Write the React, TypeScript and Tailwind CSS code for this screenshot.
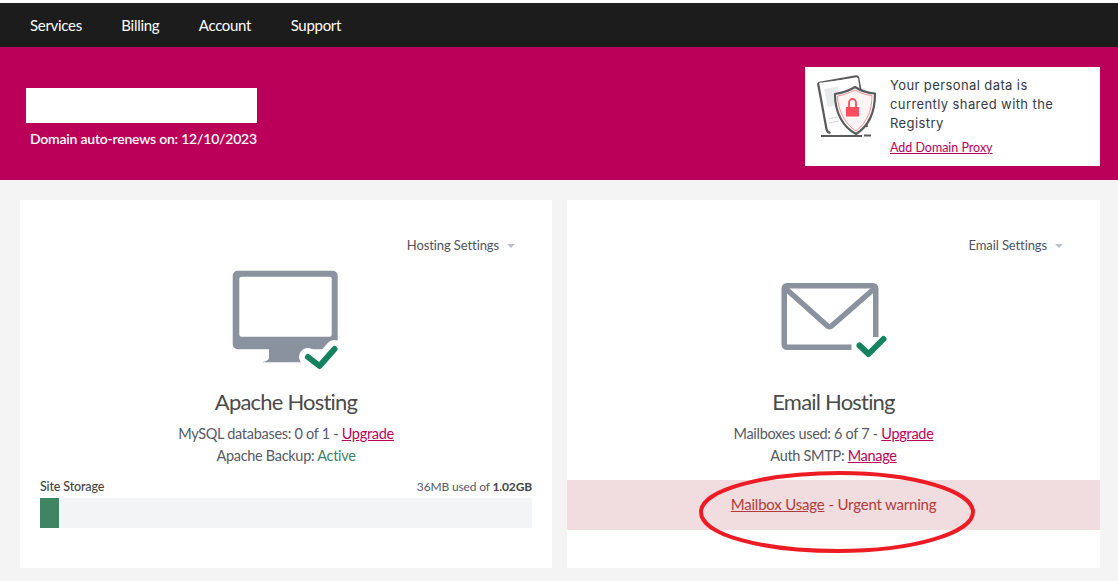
import { ReactNode } from 'react';

const font = 'font-["Lato","Noto_Sans",sans-serif]';

function MonitorIcon() {
  return (
    <svg width="110" height="102" viewBox="0 0 110 102">
      <path
        fill="#89929e"
        fillRule="evenodd"
        d="M6.700 0.700h95a5 5 0 0 1 5 5v68.600a5 5 0 0 1-5 5H72v8c0 2 1 4 4 5H31c4-1 7-2 7-5v-8H6.700a5 5 0 0 1-5-5V5.700a5 5 0 0 1 5-5zM10.300 6.700a2 2 0 0 0-2 2v56a2 2 0 0 0 2 2h88.400a2 2 0 0 0 2-2v-56a2 2 0 0 0-2-2z"
      />
      <path d="M77 87l11.500 9 15-17" fill="none" stroke="#fff" strokeWidth="18" strokeLinecap="round" strokeLinejoin="round" />
      <path d="M77 87l11.500 9 15-17" fill="none" stroke="#15835f" strokeWidth="6" strokeLinecap="round" strokeLinejoin="round" />
    </svg>
  );
}

function MailIcon() {
  return (
    <svg className="mt-[12px]" width="110" height="78" viewBox="0 0 110 78">
      <path
        d="M72.500 65.250H8a2.750 2.750 0 0 1-2.750-2.750V6.500A2.750 2.750 0 0 1 8 3.750h86a2.750 2.750 0 0 1 2.750 2.750V55"
        fill="none"
        stroke="#89929e"
        strokeWidth="5.500"
      />
      <path d="M6 6l42.500 38a3 3 0 0 0 4 0L96 6" fill="none" stroke="#89929e" strokeWidth="5.500" />
      <path d="M80.500 63.500l9 8.500 15-15" fill="none" stroke="#15835f" strokeWidth="6" strokeLinecap="round" strokeLinejoin="round" />
    </svg>
  );
}

function ShieldIcon() {
  return (
    <svg width="60" height="64" viewBox="0 0 60 64">
      <path d="M1 8L39 1.200a2 2 0 0 1 2.300 1.600L50 52" fill="#fff" stroke="#5a5a5a" strokeWidth="2" />
      <path d="M1 8l9 48 8 3 30-6L41 3z" fill="#fff" />
      <path d="M1 8l8.500 46c.3 2 2 3.500 4 4" fill="none" stroke="#5a5a5a" strokeWidth="2.200" />
      <path d="M7 14l14-2.500 2 18-12 2.500z" fill="#e8eaec" />
      <path d="M11 44l9-2M12 48l10-2" stroke="#d5d8db" strokeWidth="1.200" />
      <path d="M4 61h41M47 60.500h7" stroke="#5a5a5a" strokeWidth="2.200" fill="none" />
      <path
        d="M38 12c6 4 13 6 20 6.500C58 36 52 51 39 59 26 52 18 38 18 19c7-1 14-3 20-7z"
        fill="#fff"
        stroke="#5a5a5a"
        strokeWidth="2.200"
        strokeLinejoin="round"
      />
      <path d="M38 15c5 3 11 5 17 5.500C55 35 50 48 39 56 28 49 21 36 20.500 21c6-1 12-3 17.500-6z" fill="#fff5f5" stroke="#ff8a94" strokeWidth="1" />
      <path d="M29 32h13v9.500H29z" fill="#ff4d5e" />
      <path d="M32 32v-4.500a3.500 3.500 0 0 1 7 0V32" fill="none" stroke="#ff4d5e" strokeWidth="1.800" />
    </svg>
  );
}

function Caret() {
  return <span className="ml-[8px] mt-[1px] h-0 w-0 border-x-[4.500px] border-t-[4.500px] border-x-transparent border-t-[#bcc1c9]" />;
}

function Upgrade({ children }: { children: ReactNode }) {
  return <a className="text-[#bb005a] underline">{children}</a>;
}

function Card({
  settings,
  icon,
  title,
  children,
}: {
  settings: string;
  icon: ReactNode;
  title: string;
  children: ReactNode;
}) {
  return (
    <div className="relative flex h-[368px] flex-col bg-white">
      <div className="flex h-[70px] items-start justify-end pt-[37px] pr-[37px] text-[13px] leading-[17px] tracking-[-0.1px] text-[#4e535b]">
        <span>{settings}</span>
        <span className="flex h-[17px] items-center"><Caret /></span>
      </div>
      <div className="flex h-[102px] items-start justify-center">{icon}</div>
      <h2 className="mt-[16px] text-center text-[22px] leading-[28px] tracking-[-0.8px] text-[#4a4a4a]">{title}</h2>
      {children}
    </div>
  );
}

export default function App() {
  return (
    <div className={`${font} h-[581px] w-[1118px] overflow-hidden bg-[#f4f4f4]`}>
      <div className="h-[3px] bg-white" />
      <nav className="flex h-[44px] items-center gap-[39.500px] bg-[#1c1c1c] pl-[30px] text-[15px] tracking-[-0.3px] text-white">
        <span>Services</span>
        <span>Billing</span>
        <span>Account</span>
        <span>Support</span>
      </nav>

      <header className="flex h-[133px] items-start justify-between bg-[#bb005a] pt-[20px] pr-[18px] pl-[26px]">
        <div className="pt-[21px]">
          <div className="h-[35px] w-[231px] bg-white" />
          <p className="mt-[7px] ml-[4px] text-[14px] leading-[18px] font-semibold tracking-[-0.22px] text-white">
            Domain auto-renews on: 12/10/2023
          </p>
        </div>
        <div className="flex h-[99px] w-[295px] bg-white pt-[8px] pl-[12px]">
          <ShieldIcon />
          <div className="ml-[13px]">
            <p className='pt-[1px] font-["Inter",sans-serif] text-[13px] leading-[19px] tracking-[0.4px] text-[#333a44]'>
              Your personal data is
              <br />
              currently shared with the
              <br />
              Registry
            </p>
            <a className="mt-[7px] block text-[12.500px] leading-[16px] tracking-[-0.02px] text-[#bb005a] underline">Add Domain Proxy</a>
          </div>
        </div>
      </header>

      <main className="relative grid grid-cols-[532px_533px] gap-[15px] px-[20px] pt-[20px]">
        <Card settings="Hosting Settings" icon={<MonitorIcon />} title="Apache Hosting">
          <div className="mt-[7px] text-center text-[14.500px] leading-[22px] tracking-[-0.3px] text-[#555a63]">
            <p>
              MySQL databases: 0 of 1 - <Upgrade>Upgrade</Upgrade>
            </p>
            <p>
              Apache Backup: <span className="text-[#3f8463]">Active</span>
            </p>
          </div>
          <div className="mt-[10px] px-[20px]">
            <div className="flex items-center justify-between text-[12px] leading-[20px] tracking-[-0.15px] text-[#555a63]">
              <span className="text-[12.500px] font-medium text-[#444]">Site Storage</span>
              <span>
                36MB used of <b className="font-bold text-[#444]">1.02GB</b>
              </span>
            </div>
            <div className="mt-[1px] h-[30px] bg-[#f3f4f6]">
              <div className="h-full w-[19px] bg-[#3f8463]" />
            </div>
          </div>
        </Card>

        <Card settings="Email Settings" icon={<MailIcon />} title="Email Hosting">
          <div className="mt-[7px] text-center text-[14.500px] leading-[22px] tracking-[-0.3px] text-[#555a63]">
            <p>
              Mailboxes used: 6 of 7 - <Upgrade>Upgrade</Upgrade>
            </p>
            <p>
              Auth SMTP: <Upgrade>Manage</Upgrade>
            </p>
          </div>
          <div className="mt-[13px] flex h-[50px] items-center justify-center bg-[#f1dddf] pb-[2px] text-[15px] tracking-[-0.2px] text-[#b03a3a]">
            <a className="underline">Mailbox Usage</a>
            <span className="ml-[4px]">- Urgent warning</span>
          </div>
        </Card>

        {/* red marker ring drawn over the warning row */}
        <svg className="absolute top-[291px] left-[698px]" width="280" height="84" viewBox="0 0 280 84">
          <path
            d="M3 41C3 18 70 2 142 2C215 2 275 20 275 41C275 62 215 80 140 80C65 80 3 64 3 41Z"
            fill="none"
            stroke="#ed1c24"
            strokeWidth="4"
          />
        </svg>
      </main>
    </div>
  );
}
